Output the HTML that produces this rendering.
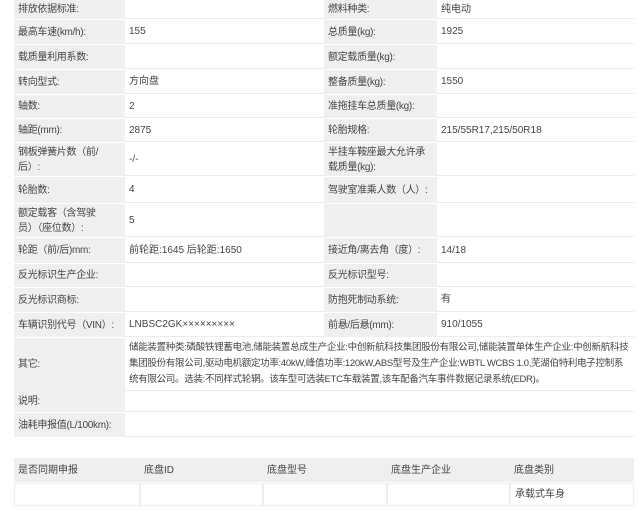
<!DOCTYPE html>
<html><head><meta charset="utf-8"><style>
body{margin:0;width:640px;height:512px;background:#fff;font-family:"Liberation Sans","Noto Sans CJK SC",sans-serif;font-size:10px;color:#444;position:relative;overflow:hidden}
.c{position:absolute;box-sizing:border-box;display:flex;align-items:center;padding-left:4px;line-height:15px}
.g{background:#efefef;letter-spacing:-0.3px}
.w{background:#fff;border-bottom:1.5px solid #ececec}
.n{white-space:nowrap}
</style></head><body>
<div id="t"></div>
<script>
const rows=[
[0,20,"排放依据标准:","","燃料种类:","纯电动"],
[20,45,"最高车速(km/h):","155","总质量(kg):","1925"],
[45,70,"载质量利用系数:","","额定载质量(kg):",""],
[70,95,"转向型式:","方向盘","整备质量(kg):","1550"],
[95,119,"轴数:","2","准拖挂车总质量(kg):",""],
[119,143,"轴距(mm):","2875","轮胎规格:","215/55R17,215/50R18"],
[143,177,"钢板弹簧片数（前/后）:","-/-","半挂车鞍座最大允许承载质量(kg):",""],
[177,204,"轮胎数:","4","驾驶室准乘人数（人）:",""],
[204,238,"额定载客（含驾驶员）（座位数）:","5","",""],
[238,264,"轮距（前/后)mm:","前轮距:1645 后轮距:1650","接近角/离去角（度）:","14/18"],
[264,288,"反光标识生产企业:","","反光标识型号:",""],
[288,313,"反光标识商标:","","防抱死制动系统:","有"],
[313,338,"车辆识别代号（VIN）:","LNBSC2GK×××××××××","前悬/后悬(mm):","910/1055"]];
let h="";
for(const r of rows){const [a,b,l1,v1,l2,v2]=r,H=b-a-1,two=b-a>30;
h+=`<div class="c g ${two?'':'n'}" style="left:14px;top:${a}px;width:111px;height:${H}px;${two?'padding-right:22px;':''}">${l1}</div>`;
h+=`<div class="c w" style="left:125px;top:${a}px;width:199px;height:${H}px">${v1}</div>`;
h+=`<div class="c g ${two?'':'n'}" style="left:324px;top:${a}px;width:113px;height:${H}px;padding-right:8px">${l2}</div>`;
h+=`<div class="c w" style="left:437px;top:${a}px;width:197px;height:${H}px">${v2}</div>`;}
h+=`<div class="c g" style="left:14px;top:338px;width:111px;height:53px">其它:</div>`;
h+=`<div class="c w" style="left:125px;top:338px;width:509px;height:53px;font-size:9.5px;letter-spacing:-0.3px;line-height:16px;padding-right:2px">储能装置种类:磷酸铁锂蓄电池,储能装置总成生产企业:中创新航科技集团股份有限公司,储能装置单体生产企业:中创新航科技集团股份有限公司,驱动电机额定功率:40kW,峰值功率:120kW,ABS型号及生产企业:WBTL WCBS 1.0,芜湖伯特利电子控制系统有限公司。选装:不同样式轮辋。该车型可选装ETC车载装置,该车配备汽车事件数据记录系统(EDR)。</div>`;
h+=`<div class="c g" style="left:14px;top:391px;width:111px;height:21px">说明:</div><div class="c w" style="left:125px;top:391px;width:509px;height:21px"></div>`;
h+=`<div class="c g n" style="left:14px;top:413px;width:111px;height:24px">油耗申报值(L/100km):</div><div class="c w" style="left:125px;top:413px;width:509px;height:24px"></div>`;
h+=`<div class="c g" style="left:14px;top:458px;width:620px;height:24px"></div>`;
const hd=["是否同期申报","底盘ID","底盘型号","底盘生产企业","底盘类别"],xs=[14,140,263,387,510,634];
for(let i=0;i<5;i++){h+=`<div class="c" style="left:${xs[i]}px;top:458px;width:${xs[i+1]-xs[i]}px;height:24px">${hd[i]}</div>`;
h+=`<div class="c" style="left:${xs[i]}px;top:483px;width:${xs[i+1]-xs[i]}px;height:23px;border:1px solid #eee;background:#fff">${i==4?"承载式车身":""}</div>`;}
document.getElementById("t").innerHTML=h;
</script>
</body></html>
